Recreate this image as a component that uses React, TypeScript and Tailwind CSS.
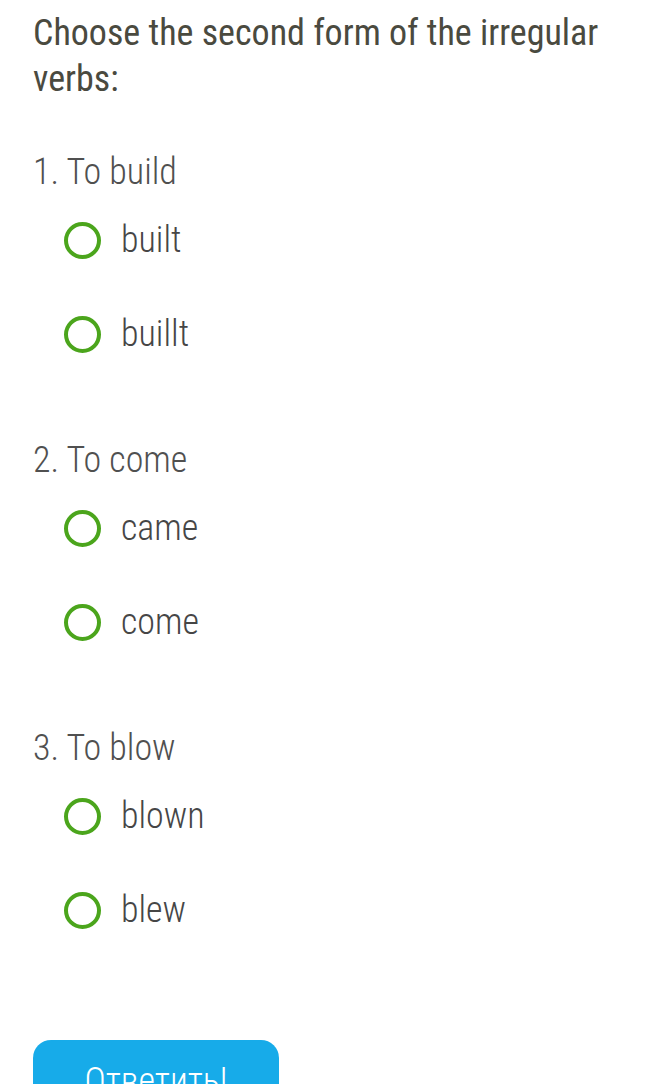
const questions = [
  { title: '1. To build', options: ['built', 'buillt'] },
  { title: '2. To come', options: ['came', 'come'] },
  { title: '3. To blow', options: ['blown', 'blew'] },
]

function Radio() {
  return <span className="block w-[37px] h-[37px] shrink-0 rounded-full border-[4px] border-[#4ba51c] bg-white" />
}

export default function App() {
  return (
    <div className="h-[1084px] overflow-hidden bg-white pl-[33px] pr-4 pt-[10px] font-['Roboto_Condensed',Roboto,sans-serif]">
      <h1 className="text-[36px] leading-[46px] font-normal text-[#4a4a3f]">
        Choose the second form of the irregular verbs:
      </h1>

      {questions.map((q, i) => (
        <div key={i} className={i === 0 ? 'mt-[47px] h-[288px]' : 'h-[288px]'}>
          <div className="text-[36px] leading-[46px] font-light text-[#505050]">{q.title}</div>
          <div className="mt-[22px] flex flex-col gap-[48px] pl-[31px]">
            {q.options.map((o) => (
              <label key={o} className="flex h-[46px] items-center gap-[20px]">
                <Radio />
                <span className="text-[36px] leading-[46px] font-light text-[#464646]">{o}</span>
              </label>
            ))}
          </div>
        </div>
      ))}

      <button className="mt-[27px] flex h-[80px] w-[246px] items-start justify-center rounded-[18px] bg-[#17abe9] pt-[18px] text-white">
        <span className="text-[36px] leading-[46px] font-light">Ответить!</span>
      </button>
    </div>
  )
}
